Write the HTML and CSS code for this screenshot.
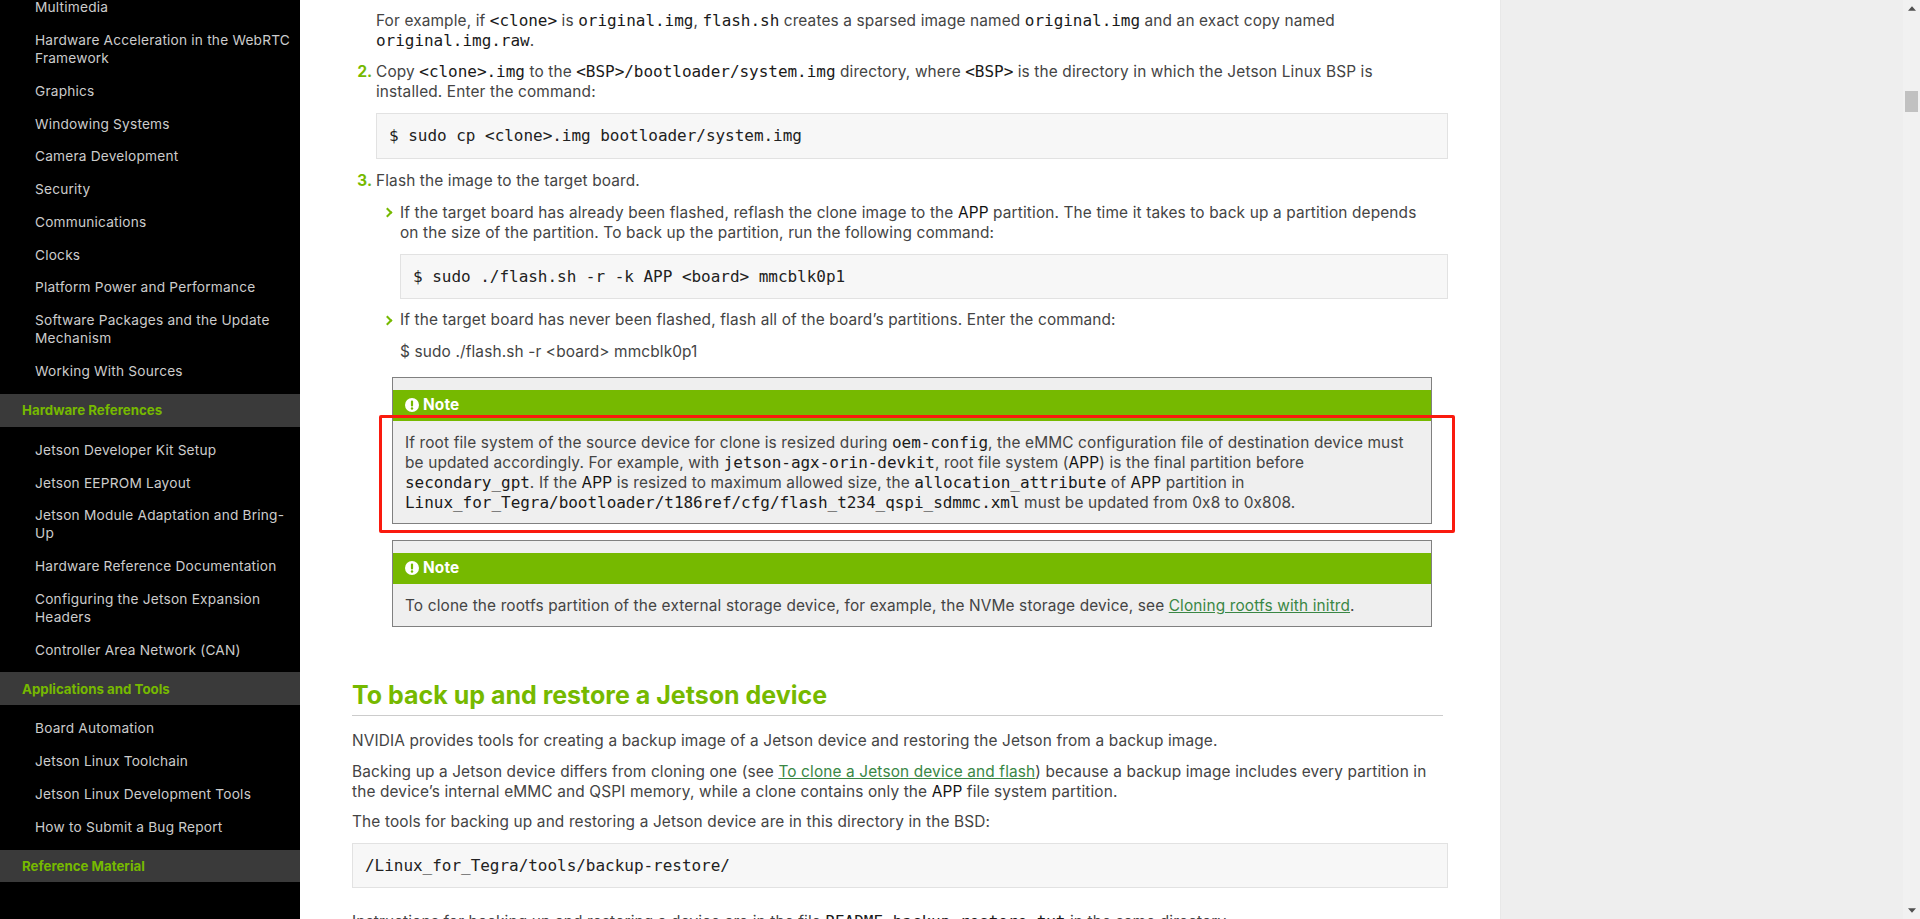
FILE: index.html
```html
<!DOCTYPE html>
<html lang="en">
<head>
    <meta charset="UTF-8">
    <meta name="viewport" content="width=device-width, initial-scale=1.0">
    <title>Flashing Support</title>
    <link rel="stylesheet" href="styles.css">
</head>
<body>
    <!-- Left navigation -->
    <nav class="sidebar">
        <ul class="nav-list nav-list-first">
            <li>Multimedia</li>
            <li>Hardware Acceleration in the WebRTC Framework</li>
            <li>Graphics</li>
            <li>Windowing Systems</li>
            <li>Camera Development</li>
            <li>Security</li>
            <li>Communications</li>
            <li>Clocks</li>
            <li>Platform Power and Performance</li>
            <li>Software Packages and the Update Mechanism</li>
            <li>Working With Sources</li>
        </ul>
        <div class="nav-heading">Hardware References</div>
        <ul class="nav-list">
            <li>Jetson Developer Kit Setup</li>
            <li>Jetson EEPROM Layout</li>
            <li>Jetson Module Adaptation and Bring-Up</li>
            <li>Hardware Reference Documentation</li>
            <li>Configuring the Jetson Expansion Headers</li>
            <li>Controller Area Network (CAN)</li>
        </ul>
        <div class="nav-heading">Applications and Tools</div>
        <ul class="nav-list">
            <li>Board Automation</li>
            <li>Jetson Linux Toolchain</li>
            <li>Jetson Linux Development Tools</li>
            <li>How to Submit a Bug Report</li>
        </ul>
        <div class="nav-heading">Reference Material</div>
    </nav>

    <!-- Document body -->
    <main class="content">
        <div class="doc">
            <p class="step-text">For example, if <code>&lt;clone&gt;</code> is <code>original.img</code>, <code>flash.sh</code> creates a sparsed image named <code>original.img</code> and an exact copy named <code>original.img.raw</code>.</p>

            <ol class="steps" start="2">
                <li>
                    <p>Copy <code>&lt;clone&gt;.img</code> to the <code>&lt;BSP&gt;/bootloader/system.img</code> directory, where <code>&lt;BSP&gt;</code> is the directory in which the Jetson Linux BSP is installed. Enter the command:</p>
                    <pre>$ sudo cp &lt;clone&gt;.img bootloader/system.img</pre>
                </li>
                <li>
                    <p>Flash the image to the target board.</p>
                    <ul class="substeps">
                        <li>
                            <p>If the target board has already been flashed, reflash the clone image to the <b>APP</b> partition. The time it takes to back up a partition depends on the size of the partition. To back up the partition, run the following command:</p>
                            <pre>$ sudo ./flash.sh -r -k APP &lt;board&gt; mmcblk0p1</pre>
                        </li>
                        <li>
                            <p>If the target board has never been flashed, flash all of the board’s partitions. Enter the command:</p>
                            <p class="plain-cmd">$ sudo ./flash.sh -r &lt;board&gt; mmcblk0p1</p>
                        </li>
                    </ul>

                    <div class="note note-first">
                        <div class="note-title">
                            <svg class="note-icon" viewBox="0 0 14 14"><circle cx="7" cy="7" r="7" fill="#fff"/><rect x="5.9" y="2.6" width="2.2" height="5.8" rx="1" fill="#76b900"/><circle cx="7" cy="10.5" r="1.2" fill="#76b900"/></svg>
                            Note
                        </div>
                        <p class="note-body">If root file system of the source device for clone is resized during <code>oem-config</code>, the eMMC configuration file of destination device must be updated accordingly. For example, with <code>jetson-agx-orin-devkit</code>, root file system (<b>APP</b>) is the final partition before <code>secondary_gpt</code>. If the <b>APP</b> is resized to maximum allowed size, the <code>allocation_attribute</code> of <b>APP</b> partition in <code>Linux_for_Tegra/bootloader/t186ref/cfg/flash_t234_qspi_sdmmc.xml</code> must be updated from 0x8 to 0x808.</p>
                        <div class="highlight-box"></div>
                    </div>

                    <div class="note">
                        <div class="note-title">
                            <svg class="note-icon" viewBox="0 0 14 14"><circle cx="7" cy="7" r="7" fill="#fff"/><rect x="5.9" y="2.6" width="2.2" height="5.8" rx="1" fill="#76b900"/><circle cx="7" cy="10.5" r="1.2" fill="#76b900"/></svg>
                            Note
                        </div>
                        <p class="note-body">To clone the rootfs partition of the external storage device, for example, the NVMe storage device, see <a href="#">Cloning rootfs with initrd</a>.</p>
                    </div>
                </li>
            </ol>

            <h2>To back up and restore a Jetson device</h2>
            <p>NVIDIA provides tools for creating a backup image of a Jetson device and restoring the Jetson from a backup image.</p>
            <p>Backing up a Jetson device differs from cloning one (see <a href="#">To clone a Jetson device and flash</a>) because a backup image includes every partition in the device’s internal eMMC and QSPI memory, while a clone contains only the <b>APP</b> file system partition.</p>
            <p>The tools for backing up and restoring a Jetson device are in this directory in the BSD:</p>
            <pre>/Linux_for_Tegra/tools/backup-restore/</pre>
            <p class="last-para">Instructions for backing up and restoring a device are in the file <code>README_backup-restore.txt</code> in the same directory.</p>
        </div>
    </main>

    <aside class="side-panel"></aside>

    <div class="scrollbar">
        <svg class="scroll-arrow" viewBox="0 0 9 5"><path d="M4.5 0 9 5H0z" fill="#505050"/></svg>
        <div class="scroll-thumb"></div>
        <svg class="scroll-arrow scroll-arrow-down" viewBox="0 0 9 5"><path d="M0 0H9L4.5 5z" fill="#505050"/></svg>
    </div>
</body>
</html>
```

FILE: styles.css
```css
html, body {
    margin: 0;
    height: 100%;
    overflow: hidden;
}

body {
    display: flex;
    font-family: Inter, Roboto, "Liberation Sans", sans-serif;
    font-size: 15.4px;
    letter-spacing: 0.14px;
    line-height: 20px;
    color: #444;
    background-color: #fff;
}

/* Sidebar */
.sidebar {
    width: 300px;
    flex-shrink: 0;
    height: 100%;
    overflow: hidden;
    background-color: #000;
}

.nav-list {
    list-style: none;
    margin: 0;
    padding: 6.6px 0;
}

.nav-list-first {
    margin-top: -16px;
}

.nav-list li {
    padding: 7.6px 8px 7.2px 35px;
    font-size: 13.7px;
    letter-spacing: 0.2px;
    line-height: 18px;
    color: #ccc;
}

.nav-heading {
    padding: 7.4px 8px 7.4px 22px;
    font-size: 13.3px;
    letter-spacing: 0;
    line-height: 18px;
    font-weight: 700;
    color: #76b900;
    background-color: #3a3a3a;
}

/* Main column */
.content {
    width: 1200px;
    flex-shrink: 0;
    height: 100%;
    overflow: hidden;
}

.doc {
    margin-top: 10.7px;
    padding: 0 52.5px 0 52px;
}

p {
    margin: 0 0 10.5px;
}

code {
    font-family: "DejaVu Sans Mono", "Liberation Mono", monospace;
    font-size: 16px;
    letter-spacing: -0.03px;
    line-height: 1;
    color: #1a1a1a;
}

b {
    font-weight: 400;
    color: #111;
}

a {
    color: #3a8745;
}

pre {
    margin: 0;
    padding: 12px 10px 12px 12px;
    height: 45.3px;
    box-sizing: border-box;
    font-family: "DejaVu Sans Mono", "Liberation Mono", monospace;
    font-size: 16px;
    letter-spacing: -0.03px;
    line-height: 20px;
    color: #222;
    background-color: #f7f7f7;
    border: 1px solid #e2e2e2;
}

.step-text {
    margin: 0 0 11px 24px;
}

.steps {
    margin: 0;
    padding-left: 24px;
}

.steps > li {
    margin-bottom: 12px;
}

.steps > li::marker {
    font-weight: 700;
    color: #76b900;
}

.steps > li > p {
    margin-bottom: 11.8px;
    padding-right: 12px;
}

.substeps {
    list-style: none;
    margin: 0;
    padding-left: 24px;
}

.substeps li {
    position: relative;
    margin-bottom: 11px;
}

.substeps li::before {
    content: "";
    position: absolute;
    left: -16.5px;
    top: 6.5px;
    width: 5px;
    height: 5px;
    border-top: 2px solid #76b900;
    border-right: 2px solid #76b900;
    transform: rotate(45deg);
}

.substeps li p {
    margin-bottom: 11.5px;
    padding-right: 12px;
}

.substeps li .plain-cmd {
    margin-bottom: 0;
}

/* Notes */
.note {
    position: relative;
    margin: 0 15.5px 16.5px 16px;
    padding-top: 11.5px;
    background-color: #efefef;
    border: 1px solid #808080;
}

.note-first {
    margin-top: 15.5px;
}

.note-title {
    display: flex;
    align-items: center;
    gap: 4px;
    height: 31px;
    padding-left: 12px;
    font-weight: 700;
    color: #fff;
    background-color: #76b900;
}

.note-icon {
    width: 14px;
    height: 14px;
}

.note-body {
    margin: 0;
    padding: 12px 12px 10px;
}

/* Red annotation over the first note */
.highlight-box {
    position: absolute;
    left: -14.5px;
    right: -24px;
    top: 36.3px;
    height: 118.5px;
    box-sizing: border-box;
    border: 3px solid #fa1a0e;
    border-radius: 2px;
}

h2 {
    margin: 53.5px 4.5px 14.7px 0;
    padding-bottom: 5px;
    font-size: 25px;
    letter-spacing: 0;
    line-height: 30px;
    font-weight: 700;
    color: #76b900;
    border-bottom: 1px solid #ccc;
}

.last-para {
    margin-top: 24px;
}

/* Right side */
.side-panel {
    flex: 1;
    background-color: #eee;
    border-left: 1px solid #e8e8e8;
}

.scrollbar {
    width: 17px;
    flex-shrink: 0;
    display: flex;
    flex-direction: column;
    align-items: center;
    background-color: #f1f1f1;
}

.scroll-arrow {
    width: 8px;
    height: 5px;
    margin-top: 6px;
    flex-shrink: 0;
}

.scroll-arrow-down {
    margin-top: auto;
    margin-bottom: 6px;
}

.scroll-thumb {
    width: 13px;
    height: 21px;
    margin-top: 80px;
    background-color: #c1c1c1;
}
```
